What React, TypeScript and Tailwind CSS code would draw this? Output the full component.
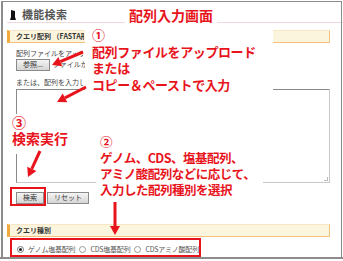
import React from "react";

const jp = { fontFamily: '"Noto Sans CJK JP", "Noto Sans", sans-serif' };

function Arrow({ x1, y1, x2, y2 }: { x1: number; y1: number; x2: number; y2: number }) {
  const a = Math.atan2(y2 - y1, x2 - x1);
  const L = 9;
  const W = 5;
  const bx = x2 - L * Math.cos(a);
  const by = y2 - L * Math.sin(a);
  const px = -Math.sin(a) * W;
  const py = Math.cos(a) * W;
  return (
    <g>
      <line x1={x1} y1={y1} x2={bx} y2={by} stroke="#e8141c" strokeWidth={3} />
      <polygon points={`${x2},${y2} ${bx + px},${by + py} ${bx - px},${by - py}`} fill="#e8141c" />
    </g>
  );
}

function Btn({ children }: { children: React.ReactNode }) {
  return (
    <div className="h-[12px] px-[6px] flex items-center border border-[#8a8a8a] bg-gradient-to-b from-[#f4f4f4] to-[#d6d6d6] text-[7px] leading-none text-[#333]">
      {children}
    </div>
  );
}

export default function App() {
  return (
    <div className="w-[343px] h-[261px] bg-white relative overflow-hidden" style={jp}>
      <div className="absolute border-l-2 border-t border-r border-[#8c8c8c] pointer-events-none" style={{ left: 1, top: 1, width: 341, height: 258 }} />
      <div className="flex flex-col pl-[7px] pt-[8px] w-[343px] h-[259px] border-b-2 border-[#8c8c8c]">
        {/* title */}
        <div className="flex items-center h-[16px] border-b border-[#f0d8dc] gap-[6px] pl-[3px]">
          <svg width="6" height="11" viewBox="0 0 6 11">
            <path d="M1 1 L5 2 L5 8 L6 11 L0 11 L1 8 Z" fill="#111" />
          </svg>
          <span className="text-[11px] font-bold text-[#555] leading-none tracking-[0.3px]">機能検索</span>
        </div>
        {/* section header */}
        <div className="mt-[7px] w-[323px] h-[14px] flex items-center bg-[#fcf5dd] border-l-[3px] border-l-[#f2a93b] border-r border-b border-r-[#f4c27a] border-b-[#f4c27a] border-t border-t-[#f8e6c4] pl-[6px]">
          <span className="text-[7px] font-bold text-[#333] leading-none w-[68px] overflow-hidden whitespace-nowrap">クエリ配列 （FASTA形式）</span>
        </div>
        <div className="pl-[9px] flex flex-col">
          <div className="mt-[7px] text-[7px] text-[#444] leading-none h-[8px] w-[67px] overflow-hidden whitespace-nowrap">配列ファイルをアップロードする場合</div>
          <div className="flex items-center gap-[3px] mt-[1px]">
            <Btn>参照...</Btn>
            <span className="text-[7px] text-[#444] leading-none w-[37px] overflow-hidden whitespace-nowrap">ファイルが選択されていません。</span>
          </div>
          <div className="mt-[8px] text-[7px] text-[#444] leading-none h-[8px] w-[67px] overflow-hidden whitespace-nowrap">または、配列を入力してください</div>
          <div className="mt-[2px] w-[314px] h-[94px] border border-[#c8c8c8] border-t-[#8a8a8a] border-l-[#8a8a8a] relative">
            <div className="absolute right-[1px] bottom-[1px] w-[4px] h-[4px] border-r border-b border-[#bbb]" />
          </div>
          <div className="flex gap-[3px] mt-[9px]">
            <Btn>検索</Btn>
            <Btn>リセット</Btn>
          </div>
        </div>
        {/* section header 2 */}
        <div className="mt-[20px] w-[323px] h-[14px] flex items-center bg-[#fcf5dd] border-l-[3px] border-l-[#f2a93b] border-r border-b border-r-[#f4c27a] border-b-[#f4c27a] border-t border-t-[#f8e6c4] pl-[6px]">
          <span className="text-[7px] font-bold text-[#333] leading-none">クエリ種別</span>
        </div>
        <div className="flex items-center h-[17px] mt-[5px] pl-[10px] gap-[2px] text-[7px] text-[#555] leading-none tracking-[-0.2px]">
          <span className="w-[7px] h-[7px] rounded-full border border-[#777] bg-white flex items-center justify-center">
            <span className="w-[3px] h-[3px] rounded-full bg-[#222]" />
          </span>
          <span className="ml-[2px]">ゲノム塩基配列</span>
          <span className="w-[7px] h-[7px] rounded-full border border-[#999] bg-white ml-[2px]" />
          <span className="ml-[2px]">CDS塩基配列</span>
          <span className="w-[7px] h-[7px] rounded-full border border-[#999] bg-white ml-[2px]" />
          <span className="ml-[2px]">CDSアミノ酸配列</span>
        </div>
      </div>

      {/* annotations */}
      <div className="absolute left-[125px] top-[5px] bg-white px-[4px] h-[20px] flex items-center text-[14px] font-bold text-[#e8141c] leading-none">
        配列入力画面
      </div>
      <div className="absolute left-[85px] top-[27px] w-[188px] h-[70px] bg-white pl-[7px] flex flex-col text-[13px] font-bold text-[#e8141c] leading-[16.5px] tracking-[-0.4px]">
        <span>①</span>
        <span>配列ファイルをアップロード</span>
        <span>または</span>
        <span>コピー＆ペーストで入力</span>
      </div>
      <div className="absolute left-[9px] top-[114px] w-[66px] h-[40px] bg-white pl-[3px] flex flex-col text-[14px] font-bold text-[#e8141c] leading-[16px]">
        <span>③</span>
        <span>検索実行</span>
      </div>
      <div className="absolute left-[96px] top-[134px] w-[167px] h-[67px] bg-white pl-[4px] flex flex-col text-[12.5px] font-bold text-[#e8141c] leading-[16px] tracking-[-0.5px]">
        <span>②</span>
        <span>ゲノム、CDS、塩基配列、</span>
        <span>アミノ酸配列などに応じて、</span>
        <span>入力した配列種別を選択</span>
      </div>
      <div className="absolute left-[10px] top-[187px] w-[36px] h-[19px] border-2 border-[#e8141c]" />
      <div className="absolute left-[10px] top-[238px] w-[191px] h-[19px] border-2 border-[#e8141c]" />
      <svg className="absolute left-0 top-0" width="343" height="261">
        <Arrow x1={83} y1={52} x2={52} y2={65} />
        <Arrow x1={86} y1={87} x2={57} y2={102} />
        <Arrow x1={40} y1={151} x2={28} y2={177} />
        <Arrow x1={115} y1={202} x2={115} y2={235} />
      </svg>
    </div>
  );
}
